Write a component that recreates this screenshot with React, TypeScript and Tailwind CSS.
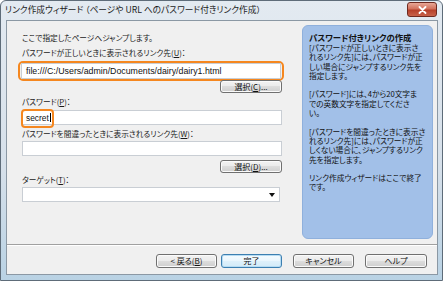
import React from "react";

const jp = "font-['Noto_Sans_CJK_JP',sans-serif] [font-feature-settings:'palt']";

function Btn({
  children,
  className = "",
  primary = false,
}: {
  children: React.ReactNode;
  className?: string;
  primary?: boolean;
}) {
  return (
    <div
      className={`flex items-center justify-center rounded-[3px] border text-[8px] leading-none text-[#111] ${
        primary
          ? "border-[#3c7fb1] bg-[linear-gradient(#f4fbff,#eaf6fd_50%,#dff1fb_50%,#d3ebf8)] shadow-[inset_0_0_0_1px_#b6dcf3]"
          : "border-[#707070] bg-[linear-gradient(#f2f2f2,#ebebeb_50%,#dddddd_50%,#cfcfcf)] shadow-[inset_0_0_0_1px_#fbfbfb]"
      } ${className}`}
    >
      {children}
    </div>
  );
}

export default function App() {
  return (
    <div
      className={`w-[443px] h-[281px] flex flex-col rounded-t-[6px] border border-[#5e6c79] bg-[linear-gradient(#e3eaf1,#d6e0ea_60%,#b9d2e4)] ${jp}`}
    >
      {/* title bar */}
      <div className="h-[19px] flex items-center justify-between pl-[4px] pr-[5px]">
        <span className="text-[8.7px] leading-none text-[#1c1c1c] whitespace-nowrap">
          リンク作成ウィザード （ページや URL へのパスワード付きリンク作成）
        </span>
        <div className="w-[30px] h-[15px] -mt-[2px] rounded-[3px] border border-[#6e2a20] bg-[linear-gradient(#e8a796,#d2715c_45%,#b6402a_55%,#c8624a)] flex items-center justify-center">
          <svg width="9" height="8" viewBox="0 0 9 8">
            <path d="M1.5 1 L7.5 7 M7.5 1 L1.5 7" stroke="#ffffff" strokeWidth="1.8" strokeLinecap="round" />
          </svg>
        </div>
      </div>

      {/* client area */}
      <div className="ml-[5px] mr-[4px] mb-[5px] flex-1 flex flex-col border border-[#8b98a4] bg-[#f0f0f0]">
        <div className="h-[223px] flex">
          {/* left column */}
          <div className="ml-[15px] w-[260px] flex flex-col pt-[12px] text-[7.7px] leading-[10px] text-[#1a1a1a] whitespace-nowrap">
            <div className="h-[10px]">ここで指定したページへジャンプします。</div>
            <div className="h-[10px] mt-[5px]">パスワードが正しいときに表示されるリンク先(<u>U</u>)：</div>
            <div className="mt-[3px] -ml-[4px] -mr-[2px] rounded-[5px] border-2 border-[#f5871f] px-[1px]">
              <div className="h-[16px] border border-[#c9ced4] bg-white flex items-center pl-[4px] text-[8.8px] font-['Liberation_Sans',sans-serif] text-[#111]">
                file:///C:/Users/admin/Documents/dairy/dairy1.html
              </div>
            </div>
            <Btn className="self-end w-[62px] h-[13px] -mt-[1px]">
              選択(<u>C</u>)...
            </Btn>
            <div className="h-[10px] mt-[4px]">パスワード(<u>P</u>)：</div>
            <div className="relative mt-[3px] h-[15px] border border-[#c9ced4] bg-white flex items-center pl-[3px] text-[8.4px] font-['Liberation_Sans',sans-serif] text-[#111]">
              secret
              <span className="w-[1px] h-[9px] bg-black ml-[1px]" />
              <div className="absolute -left-[2px] -top-[2px] w-[33px] h-[19px] rounded-[4px] border-2 border-[#f5871f]" />
            </div>
            <div className="h-[10px] mt-[4px]">パスワードを間違ったときに表示されるリンク先(<u>W</u>)：</div>
            <div className="mt-[2px] h-[15px] border border-[#c9ced4] bg-white" />
            <Btn className="self-end w-[62px] h-[13px] mt-[4px]">
              選択(<u>D</u>)...
            </Btn>
            <div className="h-[10px] mt-[2px]">ターゲット(<u>T</u>)：</div>
            <div className="mt-[2px] h-[15px] mr-[2px] border border-[#c9ced4] bg-white flex items-center justify-end pr-[4px]">
              <svg width="6" height="4" viewBox="0 0 6 4">
                <path d="M0 0 H6 L3 4 Z" fill="#111" />
              </svg>
            </div>
          </div>

          {/* right help panel */}
          <div className="ml-[20px] mt-[4px] w-[131px] h-[214px] rounded-[6px] border border-[#8fb0dc] bg-[#a2c0e8] pl-[6px] pt-[6px] text-[#111] whitespace-nowrap">
            <div className="text-[8.4px] leading-[10px] font-bold">パスワード付きリンクの作成</div>
            <div className="mt-[1px] text-[7.7px] leading-[9.3px]">
              <p>
                [パスワードが正しいときに表示さ
                <br />
                れるリンク先]には、パスワードが正
                <br />
                しい場合にジャンプするリンク先を
                <br />
                指定します。
              </p>
              <p className="mt-[9.3px]">
                [パスワード]には、4から20文字ま
                <br />
                での英数文字を指定してくださ
                <br />
                い。
              </p>
              <p className="mt-[9.3px]">
                [パスワードを間違ったときに表示さ
                <br />
                れるリンク先]には、パスワードが正
                <br />
                しくない場合に、ジャンプするリンク
                <br />
                先を指定します。
              </p>
              <p className="mt-[9.3px]">
                リンク作成ウィザードはここで終了
                <br />
                です。
              </p>
            </div>
          </div>
        </div>

        {/* separator */}
        <div className="h-[1px] bg-[#a0a0a0]" />
        <div className="h-[1px] bg-[#ffffff]" />

        {/* button row */}
        <div className="flex-1 flex items-start justify-end pr-[10px] pt-[8px]">
          <Btn className="w-[61px] h-[14px]">
            &lt; 戻る(<u>B</u>)
          </Btn>
          <Btn primary className="w-[61px] h-[14px] ml-[4px]">
            完了
          </Btn>
          <Btn className="w-[61px] h-[14px] ml-[11px]">キャンセル</Btn>
          <Btn className="w-[62px] h-[14px] ml-[11px]">ヘルプ</Btn>
        </div>
      </div>
    </div>
  );
}
